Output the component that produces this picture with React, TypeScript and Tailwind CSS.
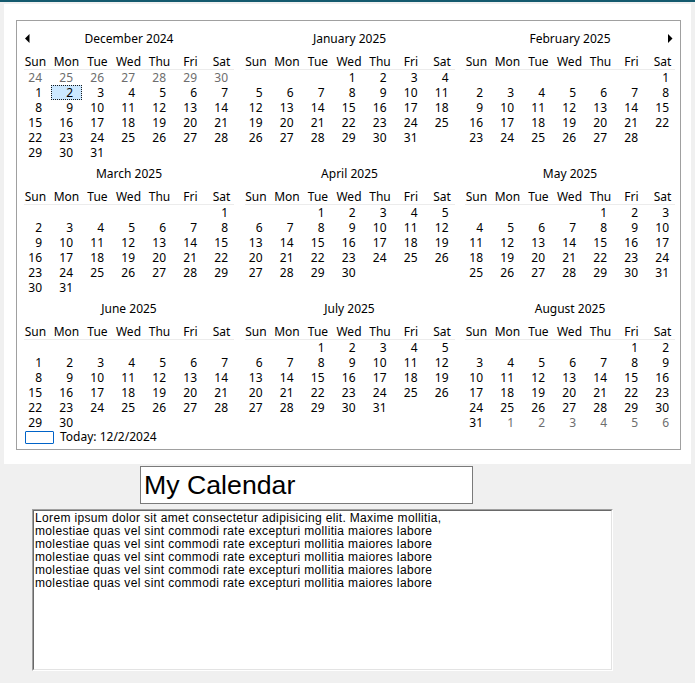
import React from "react";

const MONTHS: [number, number][] = [
  [2024, 11], [2025, 0], [2025, 1],
  [2025, 2], [2025, 3], [2025, 4],
  [2025, 5], [2025, 6], [2025, 7],
];
const NAMES = ["January","February","March","April","May","June","July","August","September","October","November","December"];
const DOW = ["Sun","Mon","Tue","Wed","Thu","Fri","Sat"];

type Cell = { label: string; gray: boolean; selected: boolean };

function cellsFor(y: number, m: number, idx: number): Cell[] {
  const first = new Date(y, m, 1).getDay();
  const offset = first === 0 ? 7 : first;
  const out: Cell[] = [];
  for (let i = 0; i < 42; i++) {
    const d = new Date(y, m, 1 - offset + i);
    const inMonth = d.getMonth() === m;
    const before = d < new Date(y, m, 1);
    let label = "";
    let gray = false;
    if (inMonth) label = String(d.getDate());
    else if ((idx === 0 && before) || (idx === 8 && !before)) {
      label = String(d.getDate());
      gray = true;
    }
    const selected = inMonth && y === 2024 && m === 11 && d.getDate() === 2;
    out.push({ label, gray, selected });
  }
  return out;
}

function Month({ y, m, idx }: { y: number; m: number; idx: number }) {
  const cells = cellsFor(y, m, idx);
  return (
    <div className="relative w-[220px]">
      {idx === 0 && (
        <svg className="absolute left-[6px] top-[3px]" width="5" height="9" viewBox="0 0 5 9">
          <path d="M4.5 0 L0 4.5 L4.5 9 Z" fill="#000" />
        </svg>
      )}
      {idx === 2 && (
        <svg className="absolute left-[208px] top-[3px]" width="5" height="9" viewBox="0 0 5 9">
          <path d="M0 0 L4.5 4.5 L0 9 Z" fill="#000" />
        </svg>
      )}
      <div className="h-[16px] leading-[16px] text-center">{NAMES[m]} {y}</div>
      <div className="mt-[6px] mx-[5px] border-b border-[#ececec]">
        <div className="grid grid-cols-[repeat(7,31px)] -mx-[4px] h-[16px] leading-[17px]">
          {DOW.map((d) => (
            <div key={d} className="text-center">{d}</div>
          ))}
        </div>
      </div>
      <div className="grid grid-cols-[repeat(7,31px)] ml-[1px]">
        {cells.map((c, i) => (
          <div
            key={i}
            className={
              c.selected
                ? "h-[15px] leading-[14px] text-right pr-[8px] bg-[#cce8ff] border border-dotted border-[#1a1a1a]"
                : c.gray
                ? "h-[15px] leading-[16px] text-right pr-[9px] text-[#6d6d6d]"
                : "h-[15px] leading-[16px] text-right pr-[9px]"
            }
          >
            {c.label}
          </div>
        ))}
      </div>
    </div>
  );
}

export default function App() {
  return (
    <div className="w-[695px] h-[683px] bg-[#f0f0f0] overflow-hidden text-black">
      <div className="h-[2px] bg-[#145a6e]" />
      <div className="mt-[2px] ml-[4px] w-[687px] h-[460px] bg-white pt-[16px] pl-[12px]">
        <div
          className="w-[665px] h-[430px] border border-[#a0a0a0] pt-[10px] pl-[2px] text-[12px]"
          style={{ fontFamily: '"Noto Sans", "Open Sans", sans-serif' }}
        >
          <div className="grid grid-cols-[repeat(3,220.5px)] gap-y-[6px]">
            {MONTHS.map(([y, m], i) => (
              <Month key={i} y={y} m={m} idx={i} />
            ))}
          </div>
          <div className="ml-[6px] h-[14px] flex items-center gap-[6px]">
            <div className="w-[29px] h-[13px] border border-[#0063c8] rounded-[1px]" />
            <span className="leading-[14px]">Today: 12/2/2024</span>
          </div>
        </div>
      </div>
      <div
        className="mt-[2px] ml-[140px] w-[333px] h-[38px] bg-white border border-[#7a7a7a] pl-[3px] text-[26.7px] leading-[37px]"
        style={{ fontFamily: '"Liberation Sans", Arial, sans-serif' }}
      >
        My Calendar
      </div>
      <div className="mt-[5px] ml-[32px] w-[581px] h-[162px] border border-t-[#a0a0a0] border-l-[#a0a0a0] border-b-white border-r-white">
        <div
          className="w-full h-full bg-white border border-t-[#696969] border-l-[#696969] border-b-[#e3e3e3] border-r-[#e3e3e3] pl-[1px] pt-[1px] text-[12px] leading-[13px] tracking-[0.35px] whitespace-pre"
          style={{ fontFamily: '"Liberation Sans", Arial, sans-serif' }}
        >
          {"Lorem ipsum dolor sit amet consectetur adipisicing elit. Maxime mollitia,\nmolestiae quas vel sint commodi rate excepturi mollitia maiores labore\nmolestiae quas vel sint commodi rate excepturi mollitia maiores labore\nmolestiae quas vel sint commodi rate excepturi mollitia maiores labore\nmolestiae quas vel sint commodi rate excepturi mollitia maiores labore\nmolestiae quas vel sint commodi rate excepturi mollitia maiores labore"}
        </div>
      </div>
    </div>
  );
}
